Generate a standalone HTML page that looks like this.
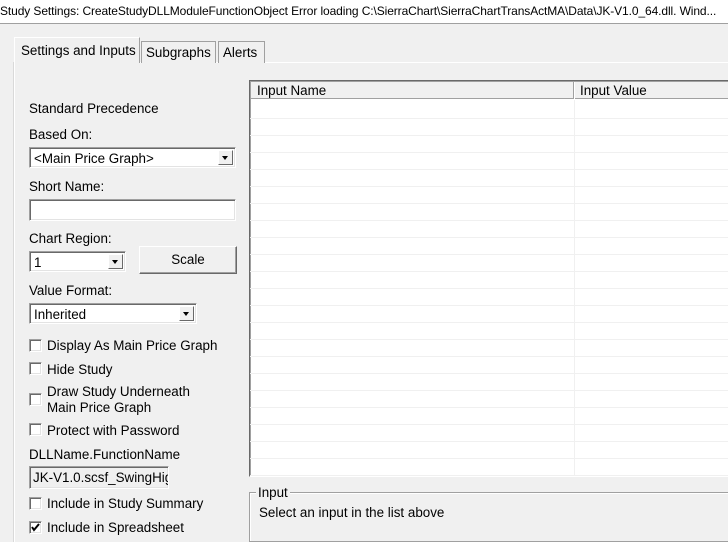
<!DOCTYPE html>
<html><head><style>
*{box-sizing:border-box;margin:0;padding:0}
body{width:728px;height:536px;overflow:hidden;background:#f0f0f0;font-family:"Liberation Sans",sans-serif;font-size:13.4px;color:#000;position:relative}
.a{position:absolute;white-space:nowrap}
.title{left:0;top:0;width:728px;height:24px;background:#fff;border-bottom:1px solid #a0a0a0;font-size:12px;padding:4px 0 0 0;letter-spacing:-0.1px}
.sunk{border:1px solid;border-color:#a0a0a0 #fff #fff #a0a0a0;box-shadow:inset 1px 1px 0 #696969,inset -1px -1px 0 #e3e3e3;background:#fff}
.combo{height:21px;padding:3px 0 0 4px}
.arr{position:absolute;right:2px;top:2px;width:15px;height:15px;background:#f0f0f0;border:1px solid;border-color:#fff #696969 #696969 #fff}
.arr:after{content:"";position:absolute;left:3px;top:5px;border-left:3.5px solid transparent;border-right:3.5px solid transparent;border-top:4px solid #000}
.cb{width:13px;height:13px}
.btn{border:1px solid;border-color:#fff #696969 #696969 #fff;box-shadow:inset -1px -1px 0 #a0a0a0;text-align:center;padding-top:5px;background:#f0f0f0}
.tab{top:41px;height:22px;border:1px solid #a0a0a0;border-bottom:none;padding:3px 0 0 4px;font-size:13.4px;background:#f0f0f0}
</style></head><body>
<div class="a title">Study Settings: CreateStudyDLLModuleFunctionObject Error loading C:\SierraChart\SierraChartTransActMA\Data\JK-V1.0_64.dll. Wind...</div>
<div class="a" style="left:14px;top:62px;width:720px;height:480px;border-left:1px solid #fff;border-top:1px solid #fff;box-shadow:-1px 0 0 #d9d9d9"></div>
<div class="a tab" style="left:14px;top:37px;width:126px;height:26px;border-color:#fff #a0a0a0 #f0f0f0 #fff;padding:5px 0 0 6px;z-index:2">Settings and Inputs</div>
<div class="a tab" style="left:141px;width:75px">Subgraphs</div>
<div class="a tab" style="left:218px;width:47px">Alerts</div>

<div class="a" style="left:29px;top:101px">Standard Precedence</div>
<div class="a" style="left:29px;top:127px">Based On:</div>
<div class="a sunk combo" style="left:29px;top:147px;width:207px">&lt;Main Price Graph&gt;<div class="arr"></div></div>
<div class="a" style="left:29px;top:179px">Short Name:</div>
<div class="a sunk" style="left:29px;top:199px;width:207px;height:22px"></div>
<div class="a" style="left:29px;top:231px">Chart Region:</div>
<div class="a sunk combo" style="left:29px;top:251px;width:97px">1<div class="arr"></div></div>
<div class="a btn" style="left:139px;top:246px;width:98px;height:28px">Scale</div>
<div class="a" style="left:29px;top:283px">Value Format:</div>
<div class="a sunk combo" style="left:29px;top:303px;width:168px">Inherited<div class="arr"></div></div>

<div class="a sunk cb" style="left:29px;top:339px"></div><div class="a" style="left:47px;top:338px">Display As Main Price Graph</div>
<div class="a sunk cb" style="left:29px;top:362px"></div><div class="a" style="left:47px;top:362px">Hide Study</div>
<div class="a sunk cb" style="left:29px;top:393px"></div><div class="a" style="left:47px;top:384px;line-height:16px">Draw Study Underneath<br>Main Price Graph</div>
<div class="a sunk cb" style="left:29px;top:423px"></div><div class="a" style="left:47px;top:423px">Protect with Password</div>
<div class="a" style="left:29px;top:447px">DLLName.FunctionName</div>
<div class="a sunk" style="left:29px;top:466px;width:140px;height:23px;background:#f0f0f0;overflow:hidden;padding:3px 0 0 3px">JK-V1.0.scsf_SwingHigh</div>
<div class="a sunk cb" style="left:29px;top:497px"></div><div class="a" style="left:47px;top:496px">Include in Study Summary</div>
<div class="a sunk cb" style="left:29px;top:521px"><svg width="11" height="11" style="position:absolute;left:0;top:0"><path d="M2 5 L4 8 L9 2" stroke="#000" stroke-width="2" fill="none"/></svg></div><div class="a" style="left:47px;top:520px">Include in Spreadsheet</div>

<div class="a" style="left:249px;top:80px;width:481px;height:397px;border:1px solid;border-color:#696969 #fff #fff #696969;box-shadow:inset 1px 1px 0 #a0a0a0;background:#fff;overflow:hidden">
 <div class="a" style="left:1px;top:1px;width:480px;height:17px;background:#f0f0f0;border-bottom:1px solid #a0a0a0"></div>
 <div class="a" style="left:7px;top:2px">Input Name</div>
 <div class="a" style="left:323px;top:1px;width:2px;height:17px;border-left:1px solid #a0a0a0;border-right:1px solid #fff"></div>
 <div class="a" style="left:330px;top:2px">Input Value</div>
 <div class="a" style="left:324px;top:19px;width:1px;height:380px;background:#f0f0f0"></div>
 <div class="a" style="left:0;top:37px;width:481px;height:360px;background:repeating-linear-gradient(#f0f0f0 0 1px,transparent 1px 17px)"></div>
</div>

<div class="a" style="left:249px;top:492px;width:481px;height:50px;border:1px solid #a0a0a0;box-shadow:inset 1px 1px 0 #fff"></div>
<div class="a" style="left:256px;top:485px;background:#f0f0f0;padding:0 2px 0 2px">Input</div>
<div class="a" style="left:259px;top:505px">Select an input in the list above</div>
</body></html>
